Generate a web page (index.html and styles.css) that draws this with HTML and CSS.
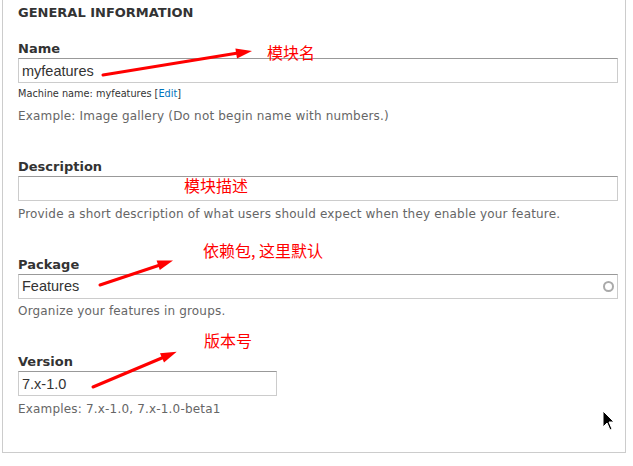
FILE: index.html
```html
<!DOCTYPE HTML>
<html>
<head>
    <title>Feature settings</title>
    <link rel="stylesheet" href="styles.css">
</head>
<body>
    <div class="panel">
        <div class="panel-title">General information</div>

        <div class="form-item">
            <label class="label" for="name">Name</label>
            <input class="text" type="text" id="name" value="myfeatures">
            <div class="machine">Machine name: myfeatures [<a href="#">Edit</a>]</div>
            <div class="desc desc-name">Example: Image gallery (Do not begin name with numbers.)</div>
        </div>

        <div class="form-item">
            <label class="label" for="description">Description</label>
            <input class="text" type="text" id="description" value="">
            <div class="desc">Provide a short description of what users should expect when they enable your feature.</div>
        </div>

        <div class="form-item">
            <label class="label" for="package">Package</label>
            <div class="autocomplete">
                <input class="text" type="text" id="package" value="Features">
                <span class="throbber"></span>
            </div>
            <div class="desc">Organize your features in groups.</div>
        </div>

        <div class="form-item">
            <label class="label" for="version">Version</label>
            <input class="text text-short" type="text" id="version" value="7.x-1.0">
            <div class="desc">Examples: 7.x-1.0, 7.x-1.0-beta1</div>
        </div>
    </div>

    <!-- annotations drawn on top of the screenshot -->
    <span class="note note1">模块名</span>
    <span class="note note2">模块描述</span>
    <span class="note note3">依赖包, 这里默认</span>
    <span class="note note4">版本号</span>

    <svg class="arrows" width="633" height="466" viewBox="0 0 633 466">
        <line x1="103" y1="75" x2="238" y2="53" />
        <polygon points="252,51 237,58.4 235.4,48.6" />
        <line x1="100" y1="285" x2="160" y2="265" />
        <polygon points="173,260.5 159.8,269.9 156.6,260.5" />
        <line x1="93" y1="387" x2="163" y2="357.5" />
        <polygon points="176.7,351.7 164,362.5 160,353.3" />
    </svg>

    <svg class="cursor" width="14" height="22" viewBox="0 0 14 22">
        <polygon points="1,1 1,17 5,13 8,20 10,19 7,12 12,12" />
    </svg>
</body>
</html>
```

FILE: styles.css
```css
body {
    margin: 0;
    width: 633px;
    height: 466px;
    position: relative;
    overflow: hidden;
    background-color: #ffffff;
    font-family: "DejaVu Sans", sans-serif;
    color: #333333;
}

.panel {
    margin-left: 2px;
    width: 624px;
    box-sizing: border-box;
    border: 1px solid #cccccc;
    border-top: 0;
    padding: 5px 0 0 15px;
}

.panel-title {
    font-size: 13px;
    line-height: 16px;
    font-weight: bold;
    text-transform: uppercase;
    margin-bottom: 20px;
}

.form-item {
    margin-bottom: 35px;
}

.label {
    display: block;
    font-size: 13px;
    line-height: 16px;
    font-weight: bold;
    margin-bottom: 1px;
}

.text {
    display: block;
    margin: 0;
    width: 600px;
    height: 25px;
    box-sizing: border-box;
    border: 1px solid #cccccc;
    border-top-color: #999999;
    border-radius: 0;
    padding: 0 3px;
    font-family: "Liberation Sans", Arial, sans-serif;
    font-size: 14.5px;
    color: #333333;
    background: #ffffff;
    outline: none;
}

.text-short {
    width: 259px;
}

.autocomplete {
    position: relative;
    width: 600px;
}

.throbber {
    position: absolute;
    right: 4px;
    top: 7px;
    width: 7px;
    height: 7px;
    border: 2px solid #aaaaaa;
    border-radius: 50%;
}

.machine {
    font-size: 9.75px;
    line-height: 12px;
    margin-top: 5px;
}

.machine a {
    color: #0074bd;
    text-decoration: none;
}

.desc {
    font-size: 12px;
    line-height: 16px;
    letter-spacing: 0.18px;
    color: #666666;
    margin-top: 4.5px;
}

.desc-name {
    margin-top: 8px;
}

.note {
    position: absolute;
    font-family: "Noto Sans CJK SC", sans-serif;
    font-size: 16px;
    line-height: 16px;
    color: #ff0000;
    white-space: nowrap;
}

.note1 { left: 267px; top: 44px; }
.note2 { left: 184px; top: 177px; }
.note3 { left: 203px; top: 242px; }
.note4 { left: 204px; top: 332px; }

.arrows {
    position: absolute;
    left: 0;
    top: 0;
}

.arrows line {
    stroke: #ff0000;
    stroke-width: 3;
    stroke-linecap: round;
}

.arrows polygon {
    fill: #ff0000;
}

.cursor {
    position: absolute;
    left: 602px;
    top: 410px;
}

.cursor polygon {
    fill: #000000;
    stroke: #ffffff;
    stroke-width: 1;
    stroke-linejoin: round;
}
```
